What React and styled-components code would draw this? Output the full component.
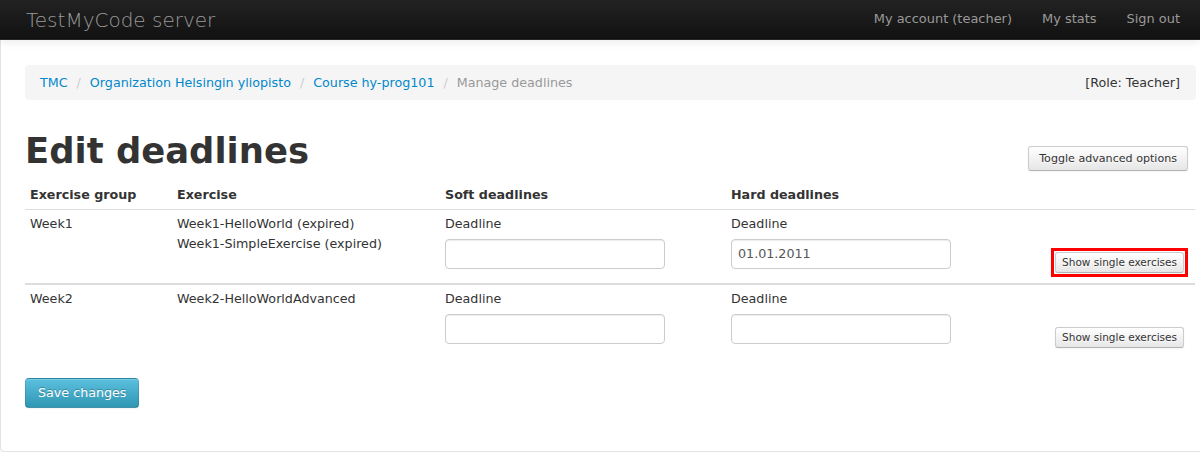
import React from 'react';
import styled, { createGlobalStyle } from 'styled-components';

const GlobalStyle = createGlobalStyle`
  body {
    margin: 0;
    background: #fff;
    font-family: "DejaVu Sans", Verdana, sans-serif;
    font-size: 12.7px;
    line-height: 20px;
    color: #333;
  }
`;

const Navbar = styled.div`
  height: 40px;
  display: flex;
  align-items: center;
  justify-content: space-between;
  background-image: linear-gradient(to bottom, #222, #111);
  border-bottom: 1px solid #252525;
  box-sizing: border-box;
  box-shadow: 0 1px 10px rgba(0, 0, 0, 0.1);
  position: relative;
  z-index: 2;
  .brand {
    margin-left: 26px;
    font-size: 20px;
    font-weight: 200;
    line-height: 20px;
    color: #999;
  }
  .nav {
    display: flex;
    padding-right: 5px;
    margin-top: -2px;
  }
`;

const NavLink = styled.a`
  padding: 10px 15px;
  font-size: 12.95px;
  line-height: 20px;
  color: #999;
  text-decoration: none;
`;

const Page = styled.div`
  border-left: 1px solid #e3e3e3;
  border-bottom: 1px solid #e3e3e3;
  border-radius: 0 0 0 4px;
  padding: 25px 4px 43px 24px;
`;

const Breadcrumb = styled.ul`
  display: flex;
  align-items: center;
  margin: 0 0 20px;
  padding: 8px 15px;
  line-height: 19px;
  list-style: none;
  background: #f5f5f5;
  border-radius: 4px;
  a {
    color: #0088cc;
    text-decoration: none;
  }
  .active {
    color: #999;
  }
  .role {
    margin-left: auto;
    margin-right: 1px;
    color: #333;
  }
`;

const Divider = styled.span`
  padding: 0 9px;
  color: #ccc;
`;

const TitleRow = styled.div`
  display: flex;
  justify-content: space-between;
  align-items: flex-end;
  margin-bottom: 10px;
  h1 {
    margin: 11px 0 0;
    font-size: 35.4px;
    line-height: 40px;
    font-weight: bold;
    color: #333;
  }
`;

const Button = styled.button`
  display: inline-block;
  box-sizing: border-box;
  font-family: inherit;
  font-size: ${(p) => (p.$size === 'mini' ? '10.5px' : '11.1px')};
  line-height: 19px;
  padding: ${(p) => (p.$size === 'mini' ? '0 6px' : '2px 10px')};
  margin-right: ${(p) => (p.$size === 'mini' ? '0' : '8px')};
  color: #333;
  text-shadow: 0 1px 1px rgba(255, 255, 255, 0.75);
  background-image: linear-gradient(to bottom, #fff, #e6e6e6);
  border: 1px solid #ccc;
  border-bottom-color: #b3b3b3;
  border-radius: 3px;
  box-shadow: inset 0 1px 0 rgba(255, 255, 255, 0.2), 0 1px 2px rgba(0, 0, 0, 0.05);
`;

const Highlight = styled.span`
  display: inline-block;
  line-height: 0;
  padding: ${(p) => (p.$on ? '1px' : '0')};
  margin: ${(p) => (p.$on ? '-4px -4px -4px 0' : '0')};
  border: ${(p) => (p.$on ? '3px solid #f00' : 'none')};
  vertical-align: top;
`;

const SaveButton = styled.button`
  font-family: inherit;
  font-size: 12.7px;
  line-height: 20px;
  padding: 4px 12px;
  color: #fff;
  text-shadow: 0 -1px 0 rgba(0, 0, 0, 0.25);
  background-image: linear-gradient(to bottom, #5bc0de, #2f96b4);
  border: 1px solid rgba(0, 0, 0, 0.1);
  border-bottom-color: rgba(0, 0, 0, 0.25);
  border-radius: 4px;
  box-shadow: inset 0 1px 0 rgba(255, 255, 255, 0.2), 0 1px 2px rgba(0, 0, 0, 0.05);
`;

const Table = styled.table`
  width: 1170px;
  table-layout: fixed;
  border-collapse: collapse;
  margin-bottom: 20px;
  th {
    text-align: left;
    font-weight: bold;
    padding: 4px 5px;
    line-height: 20px;
  }
`;

const Group = styled.tbody`
  td {
    border-top: ${(p) => (p.$first ? '1px' : '2px')} solid #ddd;
    padding: 4px 5px;
    vertical-align: top;
    line-height: 20px;
  }
`;

const ActionCell = styled.td`
  && {
    padding: 42px 11px 0 0;
    text-align: right;
  }
`;

const Label = styled.label`
  display: block;
  margin-bottom: 5px;
`;

const Input = styled.input`
  display: block;
  width: 206px;
  height: 20px;
  padding: 4px 6px;
  margin: 0 0 10px;
  font-family: inherit;
  font-size: 12.7px;
  line-height: 20px;
  color: #555;
  border: 1px solid #ccc;
  border-radius: 4px;
  box-shadow: inset 0 1px 1px rgba(0, 0, 0, 0.075);
`;

const groups = [
  {
    name: 'Week1',
    exercises: ['Week1-HelloWorld (expired)', 'Week1-SimpleExercise (expired)'],
    soft: '',
    hard: '01.01.2011',
    highlight: true,
  },
  {
    name: 'Week2',
    exercises: ['Week2-HelloWorldAdvanced'],
    soft: '',
    hard: '',
    highlight: false,
  },
];

const App = () => {
  return (
    <>
      <GlobalStyle />
      <Navbar>
        <span className="brand">TestMyCode server</span>
        <div className="nav">
          <NavLink>My account (teacher)</NavLink>
          <NavLink>My stats</NavLink>
          <NavLink>Sign out</NavLink>
        </div>
      </Navbar>
      <Page>
        <Breadcrumb>
          <li><a>TMC</a></li>
          <Divider>/</Divider>
          <li><a>Organization Helsingin yliopisto</a></li>
          <Divider>/</Divider>
          <li><a>Course hy-prog101</a></li>
          <Divider>/</Divider>
          <li className="active">Manage deadlines</li>
          <li className="role">[Role: Teacher]</li>
        </Breadcrumb>
        <TitleRow>
          <h1>Edit deadlines</h1>
          <Button $size="small">Toggle advanced options</Button>
        </TitleRow>
        <Table>
          <colgroup>
            <col style={{ width: 147 }} />
            <col style={{ width: 268 }} />
            <col style={{ width: 286 }} />
            <col style={{ width: 323 }} />
            <col style={{ width: 146 }} />
          </colgroup>
          <thead>
            <tr>
              <th>Exercise group</th>
              <th>Exercise</th>
              <th>Soft deadlines</th>
              <th>Hard deadlines</th>
              <th />
            </tr>
          </thead>
          {groups.map((g, i) => (
            <Group key={g.name} $first={i === 0}>
              <tr>
                <td>{g.name}</td>
                <td>
                  {g.exercises.map((e) => (
                    <div key={e}>{e}</div>
                  ))}
                </td>
                <td>
                  <Label>Deadline</Label>
                  <Input defaultValue={g.soft} />
                </td>
                <td>
                  <Label>Deadline</Label>
                  <Input defaultValue={g.hard} />
                </td>
                <ActionCell>
                  <Highlight $on={g.highlight}>
                    <Button $size="mini">Show single exercises</Button>
                  </Highlight>
                </ActionCell>
              </tr>
            </Group>
          ))}
        </Table>
        <SaveButton>Save changes</SaveButton>
      </Page>
    </>
  );
};

export default App;
